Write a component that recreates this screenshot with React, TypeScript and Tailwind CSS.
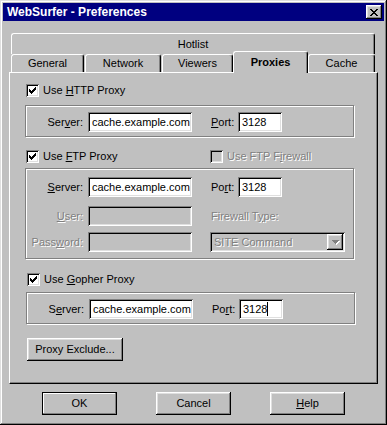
import React from "react";

const raised =
  "shadow-[inset_-1px_-1px_#000,inset_1px_1px_#fff,inset_-2px_-2px_#808080,inset_2px_2px_#dfdfdf]";
const sunken =
  "shadow-[inset_1px_1px_#808080,inset_-1px_-1px_#fff,inset_2px_2px_#000,inset_-2px_-2px_#dfdfdf]";
const dim = "text-[#808080] [text-shadow:1px_1px_0_#fff]";

function Pixels({ rows, color, className }: { rows: string[]; color: string; className?: string }) {
  return (
    <svg
      width={rows[0].length}
      height={rows.length}
      viewBox={`0 0 ${rows[0].length} ${rows.length}`}
      shapeRendering="crispEdges"
      className={className}
    >
      {rows.map((r, y) =>
        r.split("").map((c, x) => (c === "#" ? <rect key={`${x}-${y}`} x={x} y={y} width={1} height={1} fill={color} /> : null))
      )}
    </svg>
  );
}

const CHECK = ["......#", ".....##", "#...###", "##.###.", "#####..", ".###...", "..#...."];
const CLOSE = ["##....##", ".##..##.", "..####..", "...##...", "..####..", ".##..##.", "##....##"];
const ARROW = ["#######", ".#####.", "..###..", "...#..."];

function Checkbox({ checked, disabled, children }: { checked?: boolean; disabled?: boolean; children: React.ReactNode }) {
  return (
    <div className="flex items-center gap-[4px] h-[13px]">
      <span className={`w-[13px] h-[13px] shrink-0 grid place-items-center ${sunken} ${disabled ? "bg-[#c0c0c0]" : "bg-white"}`}>
        {checked && <Pixels rows={CHECK} color="#000" />}
      </span>
      <span className={`leading-none ${disabled ? dim : ""}`}>{children}</span>
    </div>
  );
}

function Field({ value, disabled, cursor, w = "w-[104px]" }: { value?: string; disabled?: boolean; cursor?: boolean; w?: string }) {
  return (
    <div className={`${w} ml-[5px] h-[20px] shrink-0 flex items-center pl-[4px] ${sunken} ${disabled ? "bg-[#c0c0c0]" : "bg-white"}`}>
      <span className="leading-none">{value}</span>
      {cursor && <span className="w-px h-[14px] bg-black" />}
    </div>
  );
}

function Label({ children, disabled, className = "" }: { children: React.ReactNode; disabled?: boolean; className?: string }) {
  return <div className={`leading-none shrink-0 ${disabled ? dim : ""} ${className}`}>{children}</div>;
}

function Group({ children, className = "" }: { children: React.ReactNode; className?: string }) {
  return (
    <div className={`w-[329px] border border-[#808080] shadow-[1px_1px_0_#fff,inset_1px_1px_0_#fff] ${className}`}>{children}</div>
  );
}

function Button({ children, def, className = "" }: { children: React.ReactNode; def?: boolean; className?: string }) {
  return (
    <div
      className={`h-[23px] grid place-items-center leading-none ${def ? "border border-black shadow-[inset_-1px_-1px_#808080,inset_1px_1px_#fff]" : raised} ${className}`}
    >
      {children}
    </div>
  );
}

function Tab({ children, w, selected, className = "" }: { children: React.ReactNode; w: string; selected?: boolean; className?: string }) {
  return (
    <div
      className={`${w} ${selected ? "h-[22px] -mb-px relative z-10 font-bold" : "h-[18px]"} bg-[#c0c0c0] border-l border-t border-white border-r border-r-black rounded-t-[3px] shadow-[inset_-1px_0_#808080] grid place-items-center leading-none ${className}`}
    >
      {children}
    </div>
  );
}

export default function App() {
  return (
    <div className="w-[387px] h-[425px] bg-[#c0c0c0] p-[3px] text-[11px] text-black font-['Liberation_Sans',Arial,sans-serif] shadow-[inset_-1px_-1px_#000,inset_1px_1px_#dfdfdf,inset_-2px_-2px_#808080,inset_2px_2px_#fff]">
      <div className="h-[18px] bg-[#000080] flex items-center justify-between pl-[4px] pr-[2px]">
        <span className="text-white font-bold text-[12px] leading-none">WebSurfer - Preferences</span>
        <span className={`w-[16px] h-[14px] bg-[#c0c0c0] grid place-items-center ${raised}`}>
          <Pixels rows={CLOSE} color="#000" />
        </span>
      </div>

      <div className="px-[6px]">
        <div className="mt-[12px] ml-[2px] w-[364px] h-[21px] bg-[#c0c0c0] border-l border-t border-white border-r border-r-black rounded-t-[3px] shadow-[inset_-1px_0_#808080] grid place-items-center leading-none">
          Hotlist
        </div>
        <div className="flex items-end h-[18px] ml-[2px]">
          <Tab w="w-[73px]">General</Tab>
          <Tab w="w-[76px]" className="ml-px">Network</Tab>
          <Tab w="w-[71px]" className="ml-px">Viewers</Tab>
          <Tab w="w-[75px]" selected>Proxies</Tab>
          <Tab w="w-[67px]">Cache</Tab>
        </div>

        <div className="w-[369px] h-[312px] border-l border-t border-white border-r border-b border-r-black border-b-black shadow-[inset_-1px_-1px_#808080] pl-[15px]">
          <div className="mt-[11px] ml-px">
            <Checkbox checked>
              Use <u>H</u>TTP Proxy
            </Checkbox>
          </div>
          <Group className="mt-[8px] h-[32px] pt-[6px]">
            <div className="flex items-center">
              <Label className="w-[57px] text-right">
                Ser<u>v</u>er:
              </Label>
              <Field value="cache.example.com" />
              <Label className="ml-[18px] w-[23px] pl-px">
                <u>P</u>ort:
              </Label>
              <Field value="3128" w="w-[44px]" />
            </div>
          </Group>

          <div className="mt-[13px] ml-px flex">
            <div className="w-[184px]">
              <Checkbox checked>
                Use <u>F</u>TP Proxy
              </Checkbox>
            </div>
            <Checkbox disabled>
              Use FTP F<u>i</u>rewall
            </Checkbox>
          </div>
          <Group className="mt-[5px] h-[91px] pt-[8px]">
            <div className="flex items-center">
              <Label className="w-[57px] text-right">
                <u>S</u>erver:
              </Label>
              <Field value="cache.example.com" />
              <Label className="ml-[18px] w-[23px] pl-px">
                Po<u>r</u>t:
              </Label>
              <Field value="3128" w="w-[44px]" />
            </div>
            <div className="flex items-center mt-[9px]">
              <Label disabled className="w-[57px] text-right">
                <u>U</u>ser:
              </Label>
              <Field disabled />
              <Label disabled className="ml-[19px]">
                Firewall T<u>y</u>pe:
              </Label>
            </div>
            <div className="flex items-center mt-[6px]">
              <Label disabled className="w-[57px] text-right">
                Pass<u>w</u>ord:
              </Label>
              <Field disabled />
              <div className={`ml-[18px] w-[135px] h-[20px] flex items-center justify-between pl-[4px] pr-[2px] bg-[#c0c0c0] ${sunken}`}>
                <span className={`leading-none ${dim}`}>SITE Command</span>
                <span className={`w-[16px] h-[16px] grid place-items-center ${raised}`}>
                  <span className="relative">
                    <Pixels rows={ARROW} color="#fff" className="absolute left-px top-px" />
                    <Pixels rows={ARROW} color="#808080" className="relative" />
                  </span>
                </span>
              </div>
            </div>
          </Group>

          <div className="mt-[14px] ml-[2px]">
            <Checkbox checked>
              Use <u>G</u>opher Proxy
            </Checkbox>
          </div>
          <Group className="mt-[6px] h-[32px] pt-[6px] ml-px">
            <div className="flex items-center">
              <Label className="w-[57px] text-right">
                S<u>e</u>rver:
              </Label>
              <Field value="cache.example.com" />
              <Label className="ml-[18px] w-[23px] pl-px">
                Po<u>r</u>t:
              </Label>
              <Field value="3128" w="w-[44px]" cursor />
            </div>
          </Group>

          <Button className="mt-[14px] ml-[2px] w-[96px]">Proxy Exclude...</Button>
        </div>

        <div className="mt-[8px] ml-[33px] flex gap-[39px]">
          <Button def className="w-[75px]">OK</Button>
          <Button className="w-[75px]">Cancel</Button>
          <Button className="w-[75px]">
            <span>
              <u>H</u>elp
            </span>
          </Button>
        </div>
      </div>
    </div>
  );
}
